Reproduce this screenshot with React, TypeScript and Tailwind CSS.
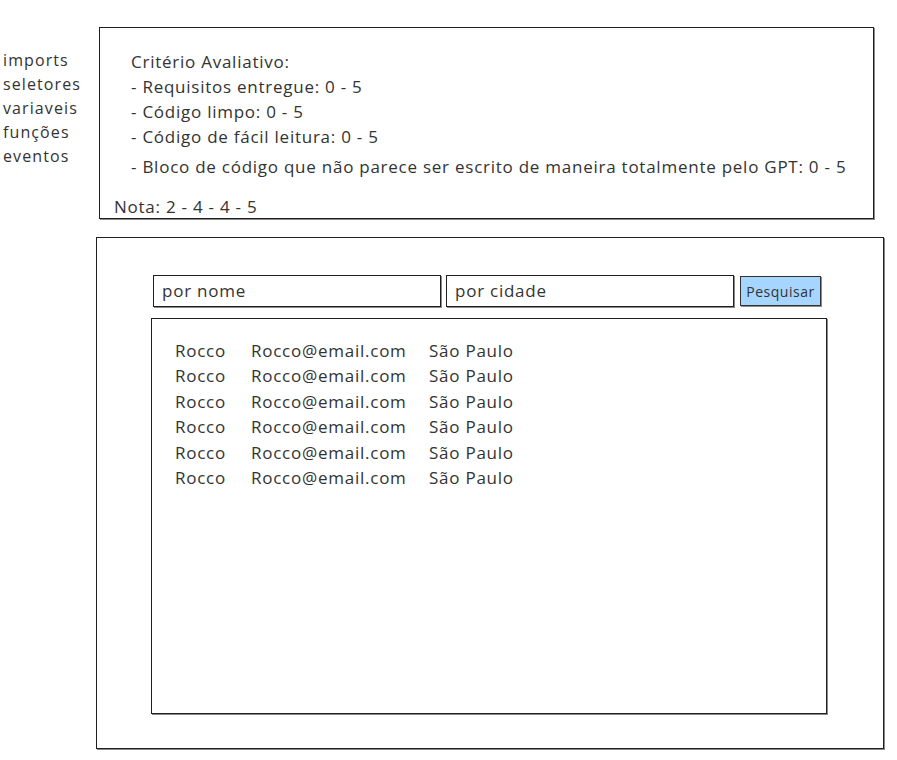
import React from 'react';

const boxCls = 'border border-[#1f1f1f] shadow-[1px_1px_0_#8a8a8a] bg-white';

const rows = Array.from({ length: 6 }, () => ({
  name: 'Rocco',
  email: 'Rocco@email.com',
  city: 'São Paulo',
}));

export default function App() {
  return (
    <div className="min-h-[760px] w-[897px] bg-white pt-[27px] text-[#333] tracking-[0.75px] font-['Open_Sans','Noto_Sans',sans-serif]">
      <div className="flex">
        <ul className="w-[99px] pl-[3px] pt-[21px] text-[16px] tracking-[1.1px] leading-[24px]">
          <li>imports</li>
          <li>seletores</li>
          <li>variaveis</li>
          <li>funções</li>
          <li>eventos</li>
        </ul>
        <div className={`${boxCls} w-[775px] h-[192px] flex flex-col`}>
          <div className="pl-[31px] pt-[21px] text-[17px] leading-[25px]">
            <p>Critério Avaliativo:</p>
            <p>- Requisitos entregue: 0 - 5</p>
            <p>- Código limpo: 0 - 5</p>
            <p>- Código de fácil leitura: 0 - 5</p>
            <p className="mt-[5px]">- Bloco de código que não parece ser escrito de maneira totalmente pelo GPT: 0 - 5</p>
          </div>
          <p className="pl-[14px] mt-[15px] text-[17px] leading-[25px]">Nota: 2 - 4 - 4 - 5</p>
        </div>
      </div>

      <div className={`${boxCls} ml-[96px] mt-[18px] w-[788px] h-[512px] pl-[56px] pt-[37px]`}>
        <div className="flex items-center gap-[5px]">
          <div className={`${boxCls} w-[288px] h-[32px] flex items-center pl-[8px] text-[17px]`}>por nome</div>
          <div className={`${boxCls} w-[288px] h-[32px] flex items-center pl-[8px] text-[17px]`}>por cidade</div>
          <button className="ml-[1px] w-[81px] h-[30px] border border-[#333] bg-[#a6d6ff] shadow-[1px_1px_0_#8a8a8a] text-[14px] tracking-[0.5px] text-[#333]">
            Pesquisar
          </button>
        </div>
        <div className={`${boxCls} mt-[11px] -ml-[2px] w-[676px] h-[396px] pl-[23px] pt-[19px]`}>
          {rows.map((r, i) => (
            <div key={i} className="flex text-[17px] leading-[25.4px]">
              <span className="w-[76px]">{r.name}</span>
              <span className="w-[178px]">{r.email}</span>
              <span>{r.city}</span>
            </div>
          ))}
        </div>
      </div>
    </div>
  );
}
